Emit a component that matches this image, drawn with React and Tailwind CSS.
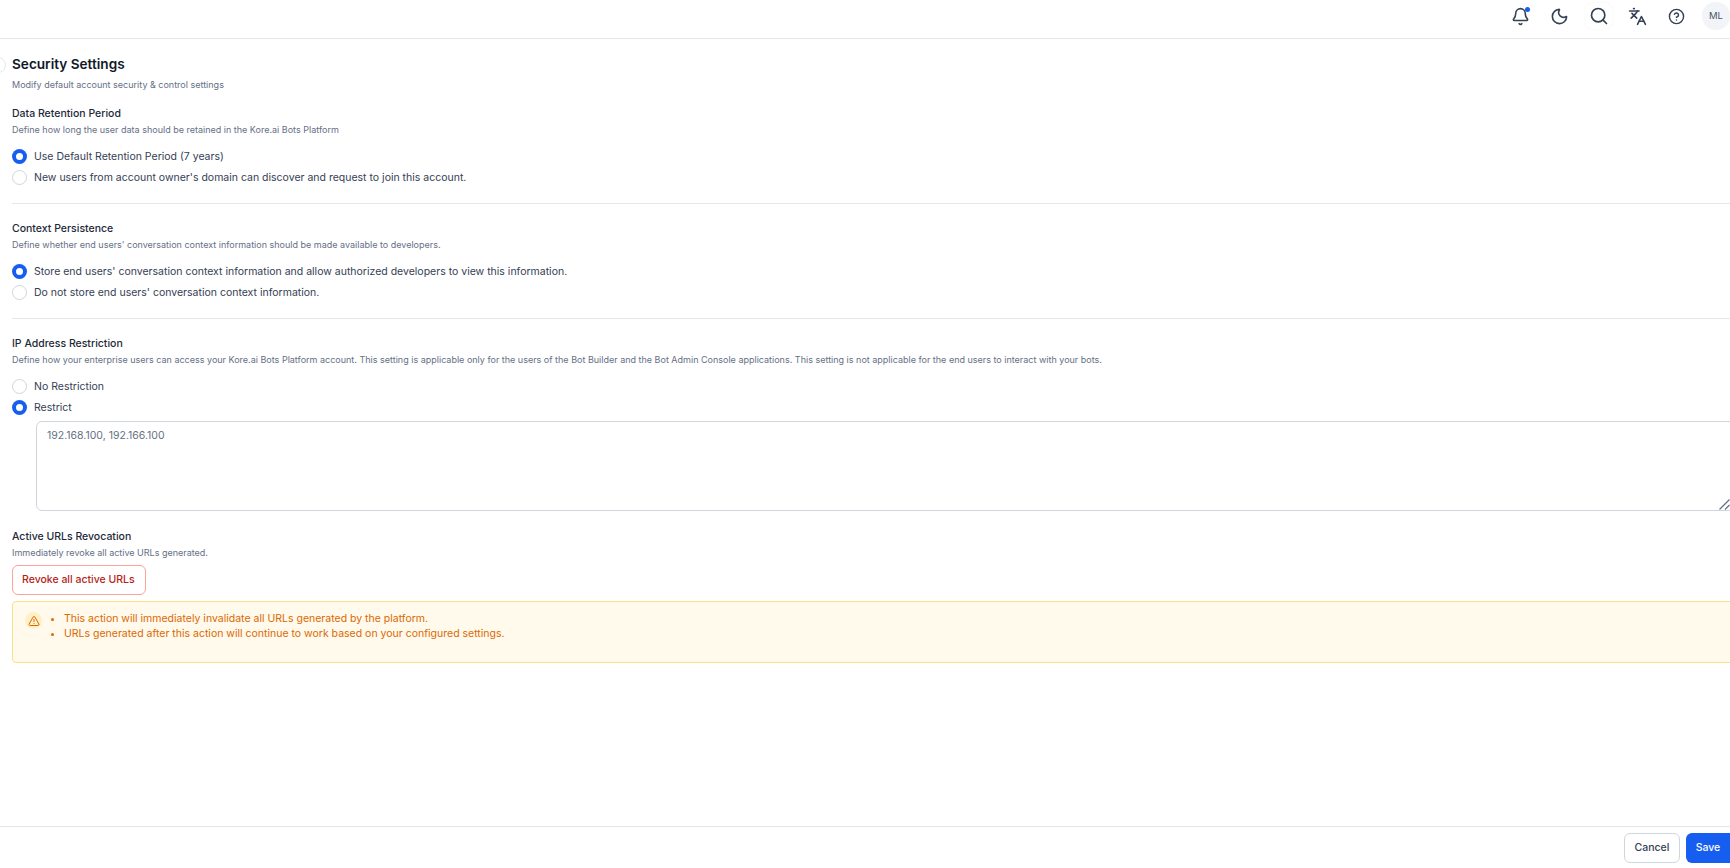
import React from "react";
import { Bell, Moon, Search, Languages, CircleHelp, TriangleAlert } from "lucide-react";

const Radio = ({ checked, label }) => (
  <label className="flex items-center gap-[7px] h-[21px]">
    {checked ? (
      <span className="w-[15px] h-[15px] rounded-full bg-[#155eef] flex items-center justify-center shrink-0">
        <span className="w-[7px] h-[7px] rounded-full bg-white" />
      </span>
    ) : (
      <span className="w-[15px] h-[15px] rounded-full border border-[#d0d5dd] bg-white shrink-0" />
    )}
    <span className="text-[10.5px] text-[#344054]">{label}</span>
  </label>
);

const SectionHead = ({ title, desc }) => (
  <div>
    <h3 className="text-[10.5px] leading-[16px] font-medium text-[#1d2939]">{title}</h3>
    <p className="text-[9px] leading-[16px] text-[#667085]">{desc}</p>
  </div>
);

const App = () => {
  return (
    <div className="h-screen w-full flex flex-col overflow-hidden bg-white font-['Inter',sans-serif]">
      {/* Top bar */}
      <header className="h-[39px] shrink-0 border-b border-[#e4e7ec] flex items-center justify-end pb-[6px]">
        <div className="flex items-center text-[#344054]">
          <button className="w-[39px] flex justify-center relative">
            <Bell size={19} />
            <span className="absolute top-0 right-[10px] w-[5px] h-[5px] rounded-full bg-[#155eef]" />
          </button>
          <button className="w-[39px] flex justify-center"><Moon size={19} /></button>
          <button className="w-[39px] flex justify-center">
            <span className="w-[27px] h-[26px] rounded-lg bg-white shadow-[0_0_3px_rgba(0,0,0,0.05)] flex items-center justify-center">
              <Search size={20} />
            </span>
          </button>
          <button className="w-[39px] flex justify-center"><Languages size={19} /></button>
          <button className="w-[39px] flex justify-center"><CircleHelp size={17} /></button>
          <div className="ml-[6px] w-[28px] h-[28px] rounded-full bg-[#f2f4f7] flex items-center justify-center text-[9.5px] text-[#475467]">
            ML
          </div>
        </div>
      </header>

      {/* Page body, a little wider than the window like the original */}
      <main className="flex-1 min-h-0 pl-3 mr-[-4px] relative">
        <span className="absolute left-[-10px] top-[18px] w-[16px] h-[16px] rounded-full border border-[#e4e7ec]" />
        <div className="pt-[15px]">
          <h1 className="text-[13.6px] leading-[20px] font-semibold text-[#101828]">Security Settings</h1>
          <p className="mt-[4px] text-[9px] leading-[14px] text-[#667085]">Modify default account security &amp; control settings</p>
        </div>

        <section className="mt-[14px]">
          <SectionHead title="Data Retention Period" desc="Define how long the user data should be retained in the Kore.ai Bots Platform" />
          <div className="mt-[8px]">
            <Radio checked label="Use Default Retention Period (7 years)" />
            <Radio label="New users from account owner's domain can discover and request to join this account." />
          </div>
        </section>

        <hr className="mt-[15px] border-[#e4e7ec]" />

        <section className="mt-[17px]">
          <SectionHead title="Context Persistence" desc="Define whether end users' conversation context information should be made available to developers." />
          <div className="mt-[8px]">
            <Radio checked label="Store end users' conversation context information and allow authorized developers to view this information." />
            <Radio label="Do not store end users' conversation context information." />
          </div>
        </section>

        <hr className="mt-[15px] border-[#e4e7ec]" />

        <section className="mt-[17px]">
          <SectionHead title="IP Address Restriction" desc="Define how your enterprise users can access your Kore.ai Bots Platform account. This setting is applicable only for the users of the Bot Builder and the Bot Admin Console applications. This setting is not applicable for the end users to interact with your bots." />
          <div className="mt-[8px]">
            <Radio label="No Restriction" />
            <Radio checked label="Restrict" />
          </div>
          <div className="pl-[24px] mt-[3px] relative">
            <textarea
              readOnly
              value="192.168.100, 192.166.100"
              className="block w-full h-[90px] resize-none rounded-[6px] border border-[#d0d5dd] px-[10px] py-[6px] text-[10.5px] leading-[16px] text-[#667085] outline-none"
            />
            <svg className="absolute right-[4px] bottom-[1px] w-[11px] h-[11px]" viewBox="0 0 11 11" fill="none" stroke="#667085" strokeWidth="1.2">
              <path d="M0.5 10.5 L10.5 0.5" />
              <path d="M6 10.5 L10.5 6" />
            </svg>
          </div>
        </section>

        <section className="mt-[18px]">
          <SectionHead title="Active URLs Revocation" desc="Immediately revoke all active URLs generated." />
          <button className="mt-[4px] h-[30px] pl-[9px] pr-[10px] rounded-[6px] border border-[#fda29b] bg-white text-[10.5px] font-medium text-[#b42318]">
            Revoke all active URLs
          </button>
        </section>

        <div className="mt-[6px] h-[62px] rounded-[4px] border border-[#fedf89] bg-[#fffaeb] flex items-start pl-[12px] pt-[9px]">
          <span className="w-[17px] h-[17px] rounded-full bg-[#fef0c7] flex items-center justify-center shrink-0 mt-[1px]">
            <TriangleAlert size={12} className="text-[#dc6803]" />
          </span>
          <ul className="ml-[10px] list-disc pl-[12px] text-[10.5px] leading-[15px] text-[#dc6803]">
            <li>This action will immediately invalidate all URLs generated by the platform.</li>
            <li>URLs generated after this action will continue to work based on your configured settings.</li>
          </ul>
        </div>
      </main>

      {/* Footer actions */}
      <footer className="h-[42px] shrink-0 border-t border-[#e4e7ec] flex items-center justify-end gap-[6px]">
        <button className="h-[30px] w-[56px] rounded-[6px] border border-[#d0d5dd] bg-white text-[10.5px] font-medium text-[#344054]">Cancel</button>
        <button className="h-[30px] w-[44px] rounded-l-[6px] bg-[#155eef] text-[10.5px] font-medium text-white">Save</button>
      </footer>
    </div>
  );
};

export default App;
